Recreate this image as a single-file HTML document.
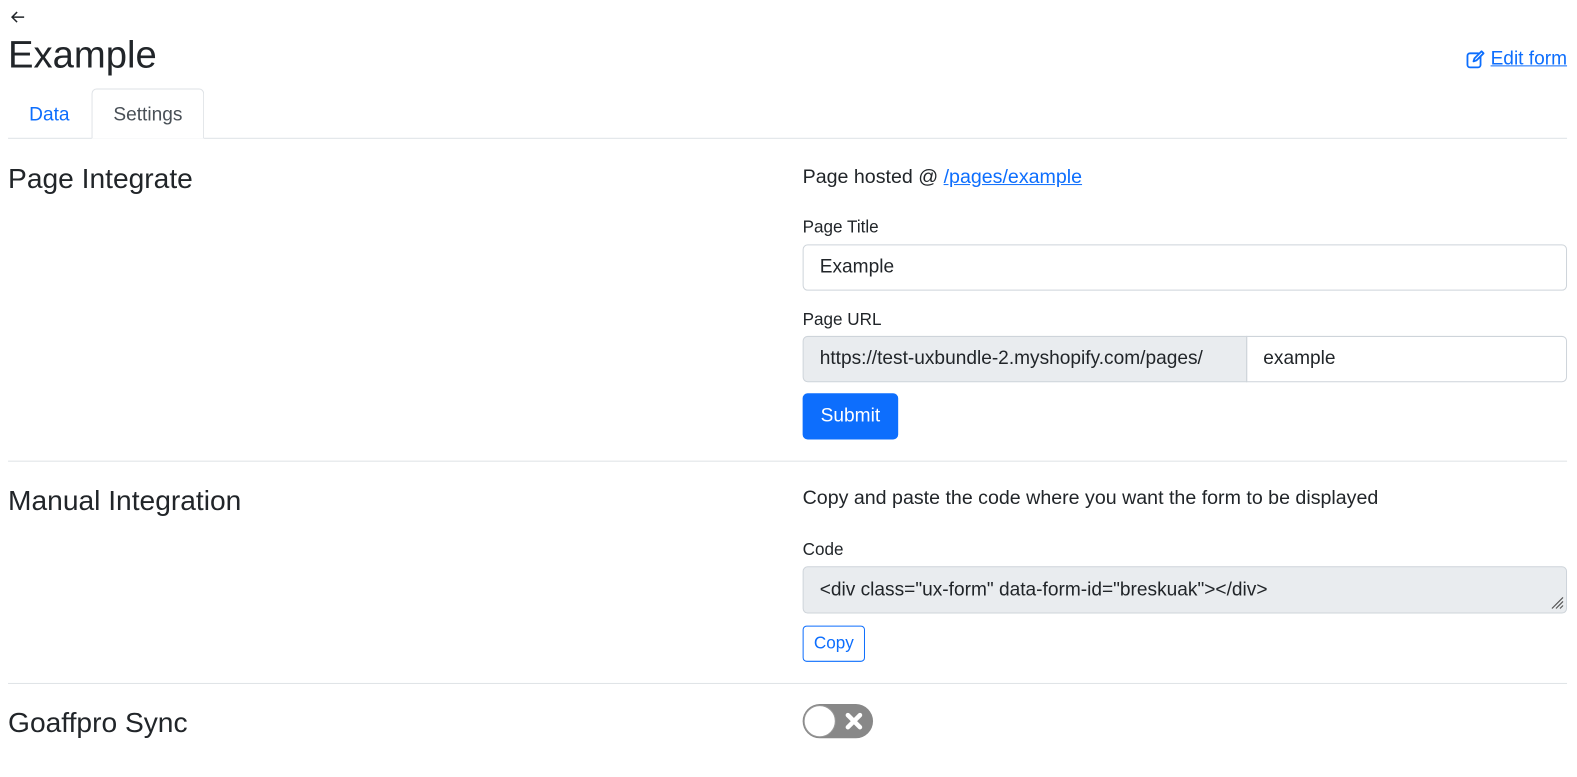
<!DOCTYPE html>
<html style="overflow:hidden;width:1577px;height:777px"><head><meta charset="utf-8"><style>
*{box-sizing:border-box;margin:0;padding:0}
html,body{overflow:hidden}
body{width:1577px;height:777px;background:#fff;font-family:"Liberation Sans",sans-serif;color:#212529;position:relative}
#w{position:absolute;left:0;top:0;width:1577px;height:777px;transform:scale(1.0058);transform-origin:0 0}
.a{position:absolute;white-space:nowrap}
.h{font-size:28px;color:#212529;left:8px}
.lbl{font-size:17px;left:798px}
.inp{border:1px solid #ced4da;border-radius:5px;font-size:19px;display:flex;align-items:center;padding-left:16px}
.line{left:8px;width:1550px;height:1px;background:#dee2e6}
a{color:#0d6efd}
</style></head><body><div id="w">
<svg class="a" style="left:10px;top:9px" width="16" height="16" viewBox="0 0 16 16"><path d="M14 8H2M7 3L2 8l5 5" fill="none" stroke="#212529" stroke-width="1.5"/></svg>
<div class="a" style="left:8px;top:34px;font-size:38px;">Example</div>
<div class="a" style="right:19px;top:48px;font-size:19px;color:#0d6efd;display:flex;align-items:center;gap:5px">
<svg width="20" height="20" viewBox="0 0 20 20"><rect x="2" y="4" width="13" height="14" rx="2.5" fill="none" stroke="#0d6efd" stroke-width="1.8"/><path d="M8 12l1-3 7-7 2 2-7 7z" fill="#fff" stroke="#0d6efd" stroke-width="1.8" stroke-linejoin="round"/></svg>
<span style="text-decoration:underline">Edit form</span></div>
<div class="a" style="left:8px;top:137px;width:1550px;height:1px;background:#dee2e6"></div>
<div class="a" style="left:29px;top:104px;font-size:19px;color:#0d6efd">Data</div>
<div class="a" style="left:91px;top:88px;width:112px;height:50px;border:1px solid #dee2e6;border-bottom:1px solid #fff;border-radius:5px 5px 0 0;background:#fff;font-size:19px;color:#495057;text-align:center;padding-top:15px">Settings</div>

<div class="a h" style="top:162px">Page Integrate</div>
<div class="a" style="left:798px;top:165px;font-size:19.5px">Page hosted @ <a href="#">/pages/example</a></div>
<div class="a lbl" style="top:216px">Page Title</div>
<div class="a inp" style="left:798px;top:243px;width:760px;height:46px">Example</div>
<div class="a lbl" style="top:308px">Page URL</div>
<div class="a inp" style="left:798px;top:334px;width:442px;height:46px;background:#e9ecef;border-radius:5px 0 0 5px">https://test-uxbundle-2.myshopify.com/pages/</div>
<div class="a inp" style="left:1239px;top:334px;width:319px;height:46px;border-radius:0 5px 5px 0">example</div>
<div class="a" style="left:798px;top:391px;width:95px;height:46px;background:#0d6efd;border-radius:5px;color:#fff;font-size:19px;text-align:center;line-height:46px">Submit</div>
<div class="a line" style="top:458px"></div>

<div class="a h" style="top:482px">Manual Integration</div>
<div class="a" style="left:798px;top:484px;font-size:19.5px">Copy and paste the code where you want the form to be displayed</div>
<div class="a lbl" style="top:537px">Code</div>
<div class="a inp" style="left:798px;top:563px;width:760px;height:47px;background:#e9ecef">&lt;div class="ux-form" data-form-id="breskuak"&gt;&lt;/div&gt;</div>
<svg class="a" style="left:1541px;top:592px" width="14" height="14"><path d="M2 13L13 2M6 13L13 6M10 13L13 10" stroke="#555" stroke-width="1.2"/></svg>
<div class="a" style="left:798px;top:622px;width:62px;height:36px;border:1px solid #0d6efd;border-radius:4px;color:#0d6efd;font-size:17px;text-align:center;line-height:34px">Copy</div>
<div class="a line" style="top:679px"></div>

<div class="a h" style="top:703px">Goaffpro Sync</div>
<div class="a" style="left:798px;top:700px;width:70px;height:34px;background:#888;border-radius:17px">
<div class="a" style="left:1px;top:1px;width:32px;height:32px;border-radius:50%;background:#fff;border:1px solid #999"></div>
<svg class="a" style="left:42px;top:8px" width="18" height="18"><path d="M3 3L15 15M15 3L3 15" stroke="#fff" stroke-width="4.5" stroke-linecap="round"/></svg>
</div>
</div></body></html>
